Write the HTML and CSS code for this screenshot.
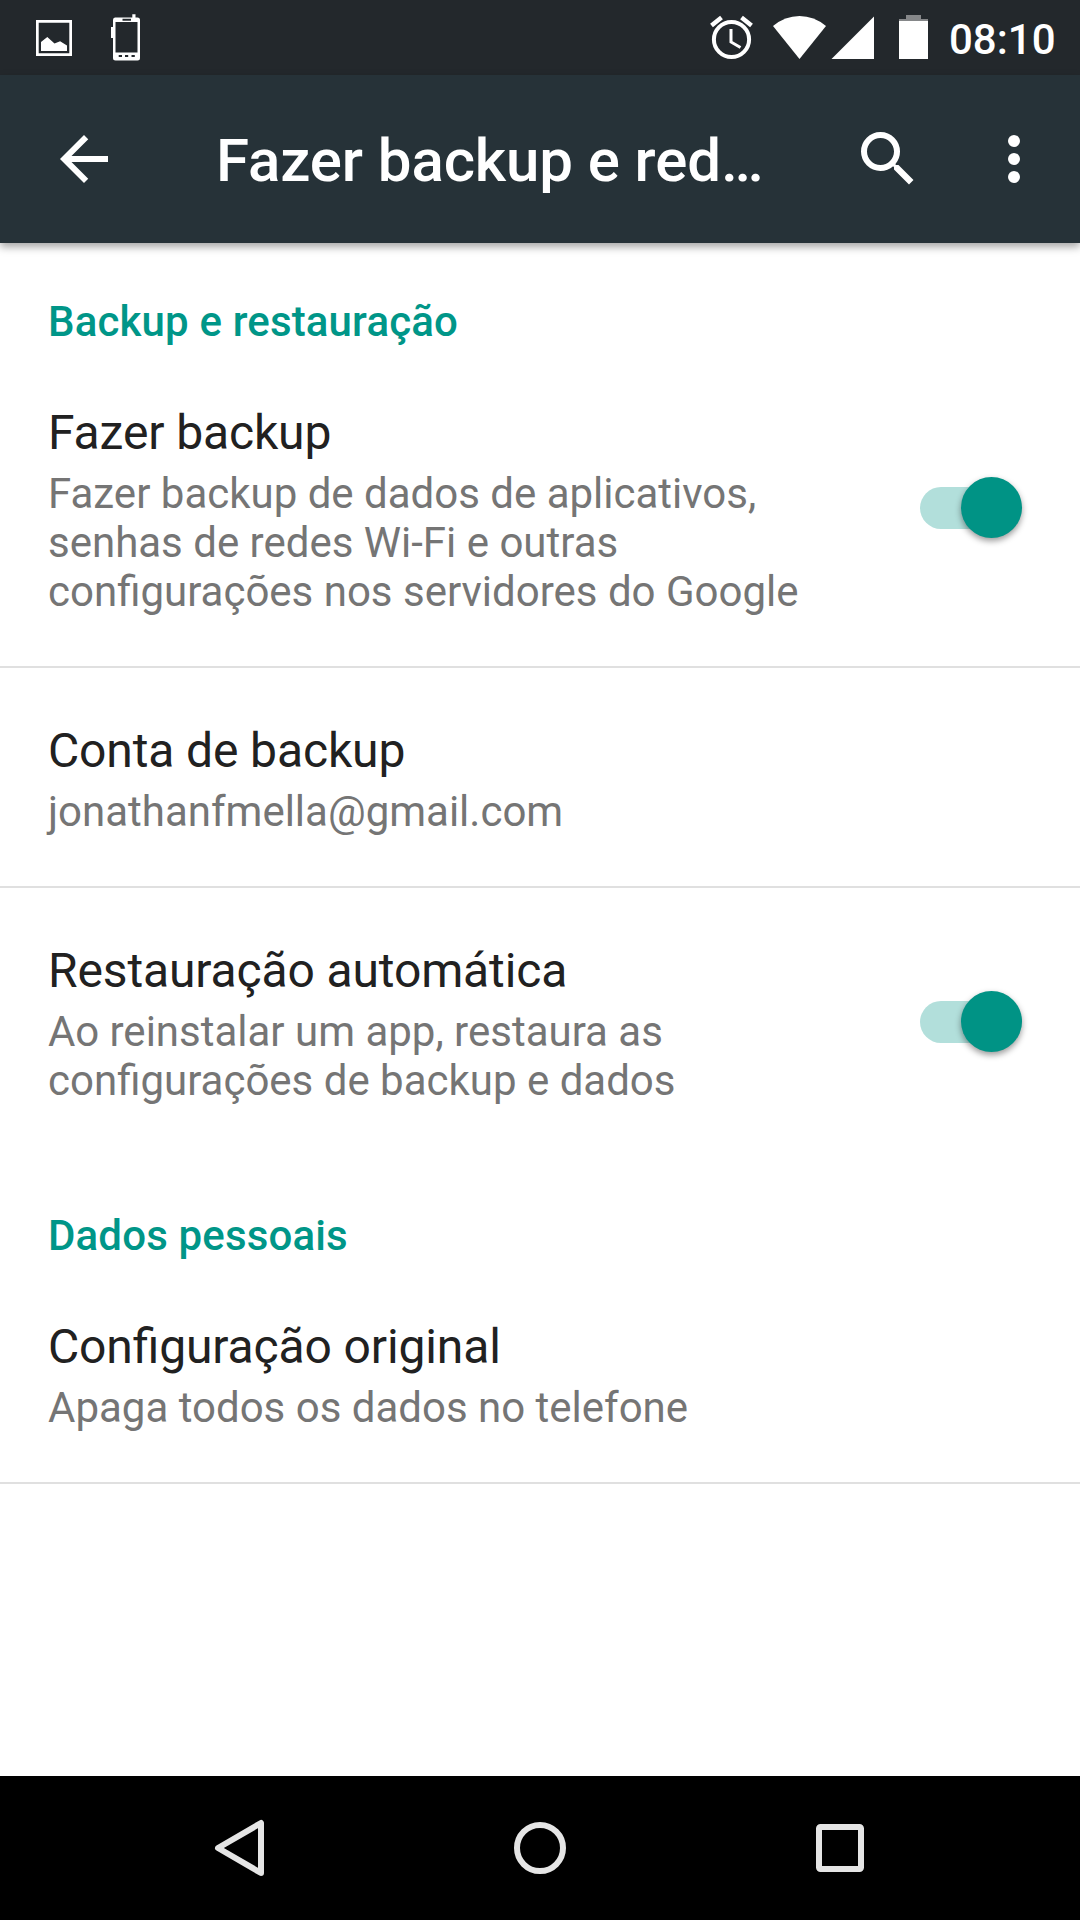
FILE: index.html
```html
<!DOCTYPE html>
<html lang="pt-BR">
<head>
<meta charset="utf-8">
<title>Fazer backup e redefinir</title>
<link rel="stylesheet" href="styles.css">
</head>
<body>
<div class="screen">
  <header class="status-bar">
    <svg class="notifications" width="110" height="75" viewBox="0 0 110 75" fill="#fff">
      <path fill-rule="evenodd" d="M0 20h36v36H0zM2.700 22.700v30.600h30.600V22.700z"/>
      <path d="M5 42l6.300-5 7.200 6.500 5.600-2.200 6.900 4.300V51H5z"/>
      <path fill-rule="evenodd" d="M79 17.500h17.300V14.300h3.200v3.200h2q2.500 0 2.500 2.500v38q0 2.500-2.500 2.500h-22q-2.500 0-2.500-2.500V38h-2V27h2v-7q0-2.500 2-2.500zM79.500 22v30.500h22V22zM86.500 18.700v2h8.500v-2zM82.700 55v2h3.300v-2zM89 55v2h3.200v-2zM95.500 55v2h3.300v-2z"/>
    </svg>
    <svg class="indicators" width="219" height="75" viewBox="0 0 219 75" fill="#fff">
      <circle cx="31.500" cy="39.500" r="17.600" fill="none" stroke="#fff" stroke-width="4"/>
      <path d="M31 29v13l9.500 5.500" fill="none" stroke="#fff" stroke-width="3"/>
      <path d="M11.500 25.500L21.500 17.500M51.500 25.500L41.500 17.500" fill="none" stroke="#fff" stroke-width="4.500"/>
      <path d="M73 26Q85 16 99.500 16T126 26L99.500 59z"/>
      <path d="M174 16.500V59H131.500z"/>
      <path d="M206 15h15v4h7v3h-29v-3h7z" fill="#858789"/>
      <path d="M199 21h29v38h-29z"/>
    </svg>
    <span class="clock">08:10</span>
  </header>

  <div class="app-bar">
    <svg class="icon-back" width="72" height="72" viewBox="0 0 24 24" fill="#fff"><path d="M20 11H7.830l5.590-5.590L12 4l-8 8 8 8 1.410-1.410L7.830 13H20v-2z"/></svg>
    <h1 class="app-title">Fazer backup e red…</h1>
    <svg class="icon-search" width="72" height="72" viewBox="0 0 24 24" fill="#fff"><path d="M15.500 14h-.79l-.28-.27A6.471 6.471 0 0 0 16 9.500 6.500 6.500 0 1 0 9.500 16c1.610 0 3.090-.59 4.230-1.570l.27.28v.79l5 4.990L20.490 19l-4.990-5zm-6 0C7.010 14 5 11.990 5 9.500S7.010 5 9.500 5 14 7.010 14 9.500 11.990 14 9.500 14z"/></svg>
    <svg class="icon-more" width="72" height="72" viewBox="0 0 24 24" fill="#fff"><circle cx="12" cy="6" r="2"/><circle cx="12" cy="12" r="2"/><circle cx="12" cy="18" r="2"/></svg>
  </div>

  <main class="settings">
    <h2 class="category">Backup e restauração</h2>
    <section class="row">
      <div class="row-text">
        <h3 class="row-title">Fazer backup</h3>
        <p class="row-summary">Fazer backup de dados de aplicativos, senhas de redes Wi-Fi e outras configurações nos servidores do Google</p>
      </div>
      <div class="switch"><span class="thumb"></span></div>
    </section>
    <section class="row">
      <div class="row-text">
        <h3 class="row-title">Conta de backup</h3>
        <p class="row-summary">jonathanfmella@gmail.com</p>
      </div>
    </section>
    <section class="row row-last">
      <div class="row-text">
        <h3 class="row-title">Restauração automática</h3>
        <p class="row-summary">Ao reinstalar um app, restaura as configurações de backup e dados</p>
      </div>
      <div class="switch"><span class="thumb"></span></div>
    </section>
    <h2 class="category">Dados pessoais</h2>
    <section class="row">
      <div class="row-text">
        <h3 class="row-title">Configuração original</h3>
        <p class="row-summary">Apaga todos os dados no telefone</p>
      </div>
    </section>
  </main>

  <nav class="nav-bar">
    <svg width="60" height="60" viewBox="0 0 60 60"><path d="M51 5v50L8 30z"/></svg>
    <svg width="60" height="60" viewBox="0 0 60 60"><circle cx="30" cy="30" r="23"/></svg>
    <svg width="60" height="60" viewBox="0 0 60 60"><rect x="9" y="9" width="42" height="42" rx="1.500"/></svg>
  </nav>
</div>
</body>
</html>
```
FILE: styles.css
```css
* { box-sizing: border-box; }
body, h1, h2, h3, p { margin: 0; }
svg { display: block; flex: none; }

.screen {
  width: 1080px;
  height: 1920px;
  display: flex;
  flex-direction: column;
  background: #fff;
  font-family: Roboto, sans-serif;
  font-feature-settings: "liga" 1;
  overflow: hidden;
}

.status-bar {
  flex: none;
  height: 75px;
  display: flex;
  padding: 0 24px 0 36px;
  background: #23282c;
  color: #fff;
}
.indicators { margin-left: auto; overflow: visible; }
.clock {
  width: 107px;
  margin-left: 30px;
  font-size: 42px;
  font-weight: 500;
  line-height: 79px;
}

.app-bar {
  flex: none;
  height: 168px;
  display: flex;
  align-items: center;
  padding: 0 30px 0 48px;
  background: #263238;
  color: #fff;
  box-shadow: 0 4px 8px rgba(0, 0, 0, 0.35);
}
.app-title {
  width: 550px;
  margin-left: 96px;
  padding-top: 4px;
  white-space: nowrap;
  font-size: 60px;
  font-weight: 500;
  line-height: 72px;
  letter-spacing: -0.1px;
}
.icon-search { margin-left: 86px; }
.icon-more { margin-left: auto; }

.settings { flex: 1; }
.category {
  height: 107px;
  padding: 54px 48px 0;
  color: #009688;
  font-size: 42px;
  font-weight: 500;
  line-height: 49px;
  letter-spacing: 0.15px;
}
.row {
  display: flex;
  align-items: center;
  padding: 0 58px 0 48px;
  border-bottom: 2px solid #e0e0e0;
}
.row-last { border-bottom-color: transparent; }
.row-text {
  width: 790px;
  padding: 55px 0 50px;
}
.row-title {
  margin-bottom: 8px;
  color: #212121;
  font-size: 48px;
  font-weight: 400;
  line-height: 56px;
  letter-spacing: -0.13px;
}
.row-summary {
  color: #757575;
  font-size: 42px;
  line-height: 49px;
}
.switch {
  position: relative;
  width: 102px;
  height: 42px;
  margin-left: auto;
  border-radius: 21px;
  background: #b2dfdb;
}
.thumb {
  position: absolute;
  top: -10px;
  right: 0;
  width: 61px;
  height: 61px;
  border-radius: 50%;
  background: #009385;
  box-shadow: 0 3px 6px rgba(0, 0, 0, 0.4);
}

.nav-bar {
  flex: none;
  height: 144px;
  display: flex;
  justify-content: center;
  align-items: center;
  gap: 240px;
  background: #000;
}
.nav-bar svg {
  fill: none;
  stroke: #e5e5e5;
  stroke-width: 6;
  stroke-linejoin: round;
}
```
